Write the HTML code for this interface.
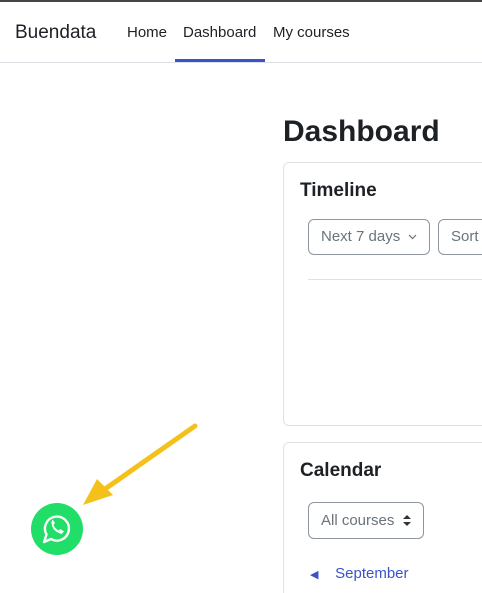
<!DOCTYPE html>
<html style="width:482px;height:593px;overflow:hidden"><head><style>
*{box-sizing:border-box;margin:0;padding:0}
body{width:482px;height:593px;overflow:hidden;background:#fff;font-family:"Liberation Sans",sans-serif;color:#1d2125;position:relative}
.top{position:absolute;left:0;top:0;width:482px;height:2px;background:#454545}
.nav{position:absolute;left:0;top:2px;width:482px;height:61px;border-bottom:1px solid #dee2e6}
.nav span{position:absolute;top:22px;font-size:15px}
.brand{left:15px;font-size:19px!important;top:20px!important}
.ul{position:absolute;left:175px;top:57px;width:90px;height:3px;background:#3a53c5}
h1{position:absolute;left:283px;top:115px;font-size:30px;font-weight:bold}
.card{position:absolute;left:283px;width:220px;border:1px solid #dee2e6;border-radius:6px}
.card h2{position:absolute;left:16px;font-size:19px;font-weight:bold}
.sel{position:absolute;border:1px solid #8f959e;border-radius:6px;font-size:15px;color:#6a737b;padding-left:12px;line-height:34px}
.hr{position:absolute;left:24px;top:116px;width:200px;height:1px;background:#dee2e6}
</style></head><body>
<div class="top"></div>
<div class="nav">
<span class="brand">Buendata</span>
<span style="left:127px">Home</span>
<span style="left:183px">Dashboard</span>
<span style="left:273px">My courses</span>
<div class="ul"></div>
</div>
<h1>Dashboard</h1>
<div class="card" style="top:162px;height:264px">
<h2 style="top:17px">Timeline</h2>
<div class="sel" style="left:24px;top:56px;width:122px;height:36px">Next 7 days</div>
<svg style="position:absolute;left:124px;top:71px" width="9" height="6"><path d="M1 1 L4.5 4.5 L8 1" fill="none" stroke="#6a737b" stroke-width="1.2"/></svg>
<div class="sel" style="left:154px;top:56px;width:80px;height:36px">Sort</div>
<div class="hr"></div>
</div>
<div class="card" style="top:442px;height:151px;border-bottom:none;border-bottom-left-radius:0;border-bottom-right-radius:0">
<h2 style="top:17px">Calendar</h2>
<div class="sel" style="left:24px;top:59px;width:116px;height:37px;line-height:35px">All courses</div>
<svg style="position:absolute;left:119px;top:72px" width="8" height="11"><path d="M0 4 L4 0 L8 4Z M0 7 L4 11 L8 7Z" fill="#333"/></svg>
<div style="position:absolute;left:26px;top:122px;color:#3a53c5;font-size:15px"><span style="font-size:11px">&#9664;</span>&nbsp;&nbsp;&nbsp;&nbsp;September</div>
</div>
<svg style="position:absolute;left:0;top:0" width="482" height="593">
<line x1="195" y1="426" x2="105" y2="489" stroke="#f3c11a" stroke-width="5" stroke-linecap="round"/>
<polygon points="83,505 97,479 113,495" fill="#f3c11a"/>
<circle cx="57" cy="529" r="26" fill="#20de68"/>
<path d="M44 542 l2.5-7.5 a12 12 0 1 1 4.5 4.5 z" fill="none" stroke="#fff" stroke-width="2.4" stroke-linejoin="round"/>
<path d="M51.5 522 q0 9 10 12 l2.5-2.5 -3.5-2.5 -2 1.5 q-3.5-2-5-5.5 l1.5-2 -2.5-3.5z" fill="#fff"/>
</svg>
</body></html>
